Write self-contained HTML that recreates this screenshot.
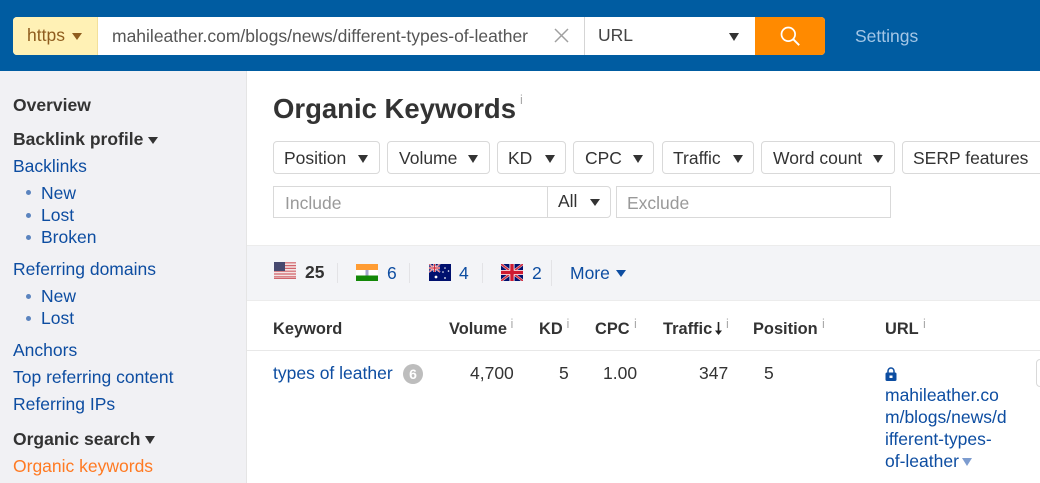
<!DOCTYPE html>
<html><head><meta charset="utf-8"><style>
html,body{margin:0;padding:0}
body{width:1040px;height:483px;position:relative;overflow:hidden;background:#fff;font-family:"Liberation Sans",Arial,sans-serif;font-size:17.5px;color:#333}
.a{position:absolute;white-space:nowrap}
.t{position:absolute;white-space:nowrap;line-height:22px;height:22px}
.l{color:#0d4da1}
.b{font-weight:bold}
.h{font-weight:bold;font-size:16.4px;color:#333}
.i{position:absolute;font-size:13px;color:#aaa;line-height:12px}
.btn{position:absolute;top:141px;height:31px;border:1px solid #d9d9d9;border-radius:4px;background:#fff;box-sizing:content-box}
.c{position:absolute;width:0;height:0;border-left:5px solid transparent;border-right:5px solid transparent;border-top:7px solid #333}
.f{border-left-width:5.5px;border-right-width:5.5px;border-top-width:8px}
.d{position:absolute;width:5px;height:5px;border-radius:50%;background:#5b84bf}
.sep{position:absolute;width:1px;background:#e3e3e6}
svg{position:absolute;display:block}
</style></head><body>
<div class="a" style="left:0;top:0;width:1040px;height:71px;background:#005ca1"></div>
<div class="a" style="left:13px;top:17px;width:812px;height:38px;background:#fff;border-radius:4px"></div>
<div class="a" style="left:13px;top:17px;width:84px;height:38px;background:#fff1b5;border-right:1px solid #f3e09a;border-radius:4px 0 0 4px"></div>
<div class="t" style="left:27px;top:24px;color:#8f5d1e">https</div>
<div class="c" style="left:72px;top:33px;border-top-color:#8f5d1e"></div>
<div class="t" style="left:112px;top:25px;color:#555">mahileather.com/blogs/news/different-types-of-leather</div>
<svg style="left:554px;top:28px" width="15" height="15" viewBox="0 0 15 15"><path d="M1 1L14 14M14 1L1 14" stroke="#a0a0a0" stroke-width="1.5" fill="none"/></svg>
<div class="a" style="left:584px;top:17px;width:1px;height:38px;background:#d5d5d5"></div>
<div class="t" style="left:598px;top:24px;color:#444">URL</div>
<div class="c f" style="left:729px;top:33px"></div>
<div class="a" style="left:755px;top:17px;width:70px;height:38px;background:#ff8a00;border-radius:0 4px 4px 0"></div>
<svg style="left:780px;top:26px" width="21" height="21" viewBox="0 0 21 21"><circle cx="8.3" cy="8.3" r="6.8" stroke="#fff" stroke-width="1.7" fill="none"/><path d="M13.2 13.2L19.2 19.2" stroke="#fff" stroke-width="1.9" fill="none"/></svg>
<div class="t" style="left:855px;top:25px;color:#a3c6e6">Settings</div>

<div class="a" style="left:0;top:71px;width:246px;height:412px;background:#f1f1f4;border-right:1px solid #e5e5e5"></div>
<div class="t b" style="left:13px;top:94px">Overview</div>
<div class="t b" style="left:13px;top:128px">Backlink profile</div>
<div class="c" style="left:148px;top:137px"></div>
<div class="t l" style="left:13px;top:155px">Backlinks</div>
<div class="d" style="left:26px;top:190px"></div><div class="t l" style="left:41px;top:182px">New</div>
<div class="d" style="left:26px;top:213px"></div><div class="t l" style="left:41px;top:204px">Lost</div>
<div class="d" style="left:26px;top:235px"></div><div class="t l" style="left:41px;top:226px">Broken</div>
<div class="t l" style="left:13px;top:258px">Referring domains</div>
<div class="d" style="left:26px;top:294px"></div><div class="t l" style="left:41px;top:285px">New</div>
<div class="d" style="left:26px;top:316px"></div><div class="t l" style="left:41px;top:307px">Lost</div>
<div class="t l" style="left:13px;top:339px">Anchors</div>
<div class="t l" style="left:13px;top:366px">Top referring content</div>
<div class="t l" style="left:13px;top:393px">Referring IPs</div>
<div class="t b" style="left:13px;top:428px">Organic search</div>
<div class="c f" style="left:145px;top:436px"></div>
<div class="t" style="left:13px;top:455px;color:#ff7a22">Organic keywords</div>

<div class="a b" style="left:273px;top:92px;font-size:27.5px;line-height:34px;color:#333">Organic Keywords</div>
<div class="i" style="left:520px;top:94px">i</div>

<div class="btn" style="left:273px;width:105px"></div><div class="t" style="left:284px;top:147px">Position</div><div class="c f" style="left:358px;top:155px"></div>
<div class="btn" style="left:387px;width:101px"></div><div class="t" style="left:399px;top:147px">Volume</div><div class="c f" style="left:468px;top:155px"></div>
<div class="btn" style="left:497px;width:67px"></div><div class="t" style="left:508px;top:147px">KD</div><div class="c f" style="left:545px;top:155px"></div>
<div class="btn" style="left:573px;width:79px"></div><div class="t" style="left:585px;top:147px">CPC</div><div class="c f" style="left:633px;top:155px"></div>
<div class="btn" style="left:662px;width:90px"></div><div class="t" style="left:673px;top:147px">Traffic</div><div class="c f" style="left:733px;top:155px"></div>
<div class="btn" style="left:761px;width:132px"></div><div class="t" style="left:773px;top:147px">Word count</div><div class="c f" style="left:873px;top:155px"></div>
<div class="btn" style="left:902px;width:160px"></div><div class="t" style="left:913px;top:147px">SERP features</div>

<div class="a" style="left:273px;top:186px;width:336px;height:30px;border:1px solid #d9d9d9;border-radius:0 4px 4px 0"></div>
<div class="a" style="left:547px;top:186px;width:1px;height:32px;background:#d9d9d9"></div>
<div class="t" style="left:285px;top:192px;color:#999">Include</div>
<div class="t" style="left:558px;top:190px">All</div>
<div class="c f" style="left:590px;top:199px;border-left-width:5px;border-right-width:5px;border-top-width:7px"></div>
<div class="a" style="left:616px;top:186px;width:273px;height:30px;border:1px solid #d9d9d9"></div>
<div class="t" style="left:627px;top:192px;color:#999">Exclude</div>

<div class="a" style="left:247px;top:245px;width:793px;height:54px;background:#f3f4f7;border-top:1px solid #ececec;border-bottom:1px solid #ececec"></div>

<svg style="left:274px;top:262px" width="22" height="17" viewBox="0 0 22 17"><rect width="22" height="17" fill="#f4e4e4"/><path d="M0 .8h22M0 3.6h22M0 6.4h22M0 9.2h22M0 12h22M0 14.8h22M0 16.5h22" stroke="#d0646c" stroke-width="1.2"/><rect width="11" height="9" fill="#46496f"/></svg>
<div class="t b" style="left:305px;top:261px">25</div>
<div class="sep" style="left:337px;top:263px;height:20px"></div>
<svg style="left:356px;top:264px" width="22" height="17" viewBox="0 0 22 17"><rect width="22" height="6" fill="#ff9c33"/><rect y="6" width="22" height="5.5" fill="#fff"/><rect y="11.5" width="22" height="5.5" fill="#138808"/><rect x="9.5" y="6" width="3" height="5.5" fill="#a5a5cf"/></svg>
<div class="t l" style="left:387px;top:262px">6</div>
<div class="sep" style="left:409px;top:263px;height:20px"></div>
<svg style="left:429px;top:264px" width="22" height="17" viewBox="0 0 22 17"><rect width="22" height="17" fill="#00106e"/><path d="M0 0L11 8M11 0L0 8" stroke="#fff" stroke-width="1.6"/><path d="M0 0L11 8M11 0L0 8" stroke="#cf2a3e" stroke-width=".7"/><path d="M5.5 0V8M0 4H11" stroke="#fff" stroke-width="2.4"/><path d="M5.5 0V8M0 4H11" stroke="#cf2a3e" stroke-width="1.3"/><circle cx="7" cy="13" r="1.4" fill="#fff"/><circle cx="16" cy="4" r=".8" fill="#fff"/><circle cx="19.5" cy="7" r=".8" fill="#fff"/><circle cx="14" cy="8" r=".8" fill="#fff"/><circle cx="16" cy="14" r=".9" fill="#fff"/></svg>
<div class="t l" style="left:459px;top:262px">4</div>
<div class="sep" style="left:482px;top:263px;height:20px"></div>
<svg style="left:501px;top:264px" width="22" height="17" viewBox="0 0 22 17"><rect width="22" height="17" fill="#00106e"/><path d="M0 0L22 17M22 0L0 17" stroke="#f2d6da" stroke-width="2.6"/><path d="M0 0L22 17M22 0L0 17" stroke="#cf2a3e" stroke-width="1.5"/><path d="M11 0V17M0 8.5H22" stroke="#fff" stroke-width="5"/><path d="M11 0V17M0 8.5H22" stroke="#cf1a30" stroke-width="3.4"/></svg>
<div class="t l" style="left:532px;top:262px">2</div>
<div class="sep" style="left:551px;top:260px;height:26px"></div>
<div class="t l" style="left:570px;top:262px">More</div>
<div class="c" style="left:616px;top:270px;border-top-color:#0d4da1"></div>

<div class="t h" style="left:273px;top:318px">Keyword</div>
<div class="t h" style="left:449px;top:318px">Volume</div><div class="i" style="left:510.5px;top:318px">i</div>
<div class="t h" style="left:539px;top:318px">KD</div><div class="i" style="left:566.5px;top:318px">i</div>
<div class="t h" style="left:595px;top:318px">CPC</div><div class="i" style="left:634px;top:318px">i</div>
<div class="t h" style="left:663px;top:318px">Traffic</div>
<svg style="left:714px;top:322px" width="9" height="13" viewBox="0 0 9 13"><path d="M4.5 0V11" stroke="#222" stroke-width="1.6"/><path d="M1 8.5L4.5 13L8 8.5Z" fill="#222"/></svg>
<div class="i" style="left:726px;top:318px">i</div>
<div class="t h" style="left:753px;top:318px">Position</div><div class="i" style="left:822px;top:318px">i</div>
<div class="t h" style="left:885px;top:318px">URL</div><div class="i" style="left:923px;top:318px">i</div>
<div class="a" style="left:247px;top:350px;width:793px;height:1px;background:#e8e8e8"></div>

<div class="t l" style="left:273px;top:362px">types of leather</div>
<div class="a b" style="left:403px;top:364px;width:20px;height:20px;border-radius:50%;background:#bdbdbd;color:#fff;font-size:14px;line-height:20px;text-align:center">6</div>
<div class="t" style="left:470px;top:362px">4,700</div>
<div class="t" style="left:559px;top:362px">5</div>
<div class="t" style="left:603px;top:362px">1.00</div>
<div class="t" style="left:699px;top:362px">347</div>
<div class="t" style="left:764px;top:362px">5</div>
<svg style="left:885px;top:367px" width="12" height="14" viewBox="0 0 12 14"><path d="M3 6V4a3 3 0 0 1 6 0V6" stroke="#0d4da1" stroke-width="1.5" fill="none"/><rect x="0.5" y="5.5" width="11" height="8.5" rx="1.5" fill="#0d4da1"/><rect x="4.5" y="8.5" width="3" height="2.5" fill="#fff"/></svg>
<div class="t l" style="left:885px;top:384px">mahileather.co</div>
<div class="t l" style="left:885px;top:406px">m/blogs/news/d</div>
<div class="t l" style="left:885px;top:428px">ifferent-types-</div>
<div class="t l" style="left:885px;top:450px">of-leather</div>
<div class="c" style="left:962px;top:458px;border-top-color:#7d9ccf;border-top-width:8px"></div>
<div class="a" style="left:1036px;top:359px;width:20px;height:26px;border:1px solid #d9d9d9;border-radius:4px"></div>
</body></html>
